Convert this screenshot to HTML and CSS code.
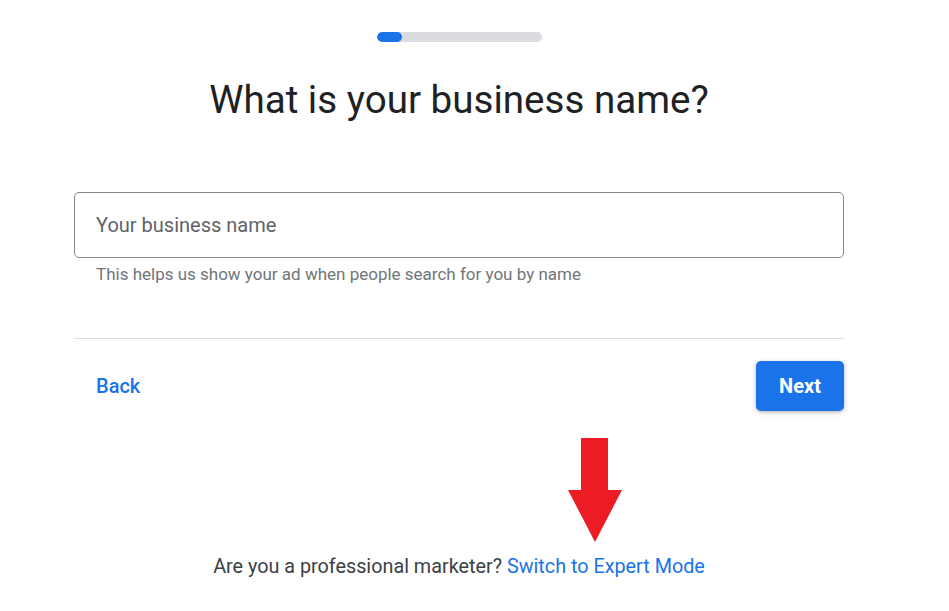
FILE: index.html
```html
<!DOCTYPE html>
<html lang="en">
<head>
<meta charset="utf-8">
<title>Business name</title>
<link rel="stylesheet" href="styles.css">
</head>
<body>
<main class="page">
  <div class="progress"><div class="progress-fill"></div></div>
  <h1 class="title">What is your business name?</h1>
  <div class="field">
    <input class="input" type="text" placeholder="Your business name">
    <p class="helper">This helps us show your ad when people search for you by name</p>
  </div>
  <hr class="divider">
  <div class="actions">
    <a class="back" href="#">Back</a>
    <button class="next" type="button">Next</button>
  </div>
  <div class="arrow-row">
    <svg class="arrow" width="54" height="104" viewBox="0 0 54 104" aria-hidden="true">
      <polygon points="13,0 40,0 40,52 54,52 27,104 0,52 13,52" fill="#ed1c24"/>
    </svg>
  </div>
  <p class="expert">Are you a professional marketer? <a class="expert-link" href="#">Switch to Expert Mode</a></p>
</main>
</body>
</html>
```
FILE: styles.css
```css
* { box-sizing: border-box; }
html, body { margin: 0; padding: 0; background: #fff; }
body { font-family: Roboto, "Liberation Sans", Arial, sans-serif; color: #202124; }
.page {
  width: 770px;
  margin-left: 74px;
  padding-top: 32px;
  display: flex;
  flex-direction: column;
}
.progress {
  align-self: center;
  width: 165px;
  height: 10px;
  border-radius: 5px;
  background: #dadce0;
  overflow: hidden;
}
.progress-fill {
  width: 25px;
  height: 100%;
  border-radius: 5px;
  background: #1a73e8;
}
.title {
  margin: 34px 0 0;
  text-align: center;
  font-size: 38.6px;
  font-weight: 400;
  line-height: 48px;
  color: #202124;
}
.field { margin-top: 68px; }
.input {
  display: block;
  width: 100%;
  height: 66px;
  border: 1px solid #80868b;
  border-radius: 5px;
  padding: 0 21px;
  font-family: Roboto, "Liberation Sans", Arial, sans-serif;
  font-size: 20px;
  color: #202124;
  outline: none;
}
.input::placeholder { color: #5f6368; opacity: 1; }
.helper {
  margin: 5px 0 0 22px;
  font-size: 17px;
  line-height: 22px;
  color: #70757a;
}
.divider {
  margin: 53px 0 0;
  border: 0;
  border-top: 1px solid #dadce0;
  height: 0;
}
.actions {
  margin-top: 22px;
  display: flex;
  justify-content: space-between;
  align-items: center;
}
.back {
  margin-left: 22px;
  font-size: 20px;
  font-weight: 500;
  color: #1a73e8;
  text-decoration: none;
}
.next {
  width: 88px;
  height: 50px;
  border: 0;
  border-radius: 5px;
  background: #1a73e8;
  color: #fff;
  font-family: Roboto, "Liberation Sans", Arial, sans-serif;
  font-size: 20px;
  font-weight: 700;
  box-shadow: 0 1px 3px rgba(60,64,67,.3), 0 2px 6px rgba(60,64,67,.15);
}
.arrow-row {
  margin-top: 27px;
  display: flex;
  padding-left: 494px;
}
.arrow { display: block; }
.expert {
  margin: 13px 0 0;
  text-align: center;
  font-size: 19.8px;
  line-height: 24px;
  color: #3c4043;
}
.expert-link { color: #1a73e8; text-decoration: none; }
```
